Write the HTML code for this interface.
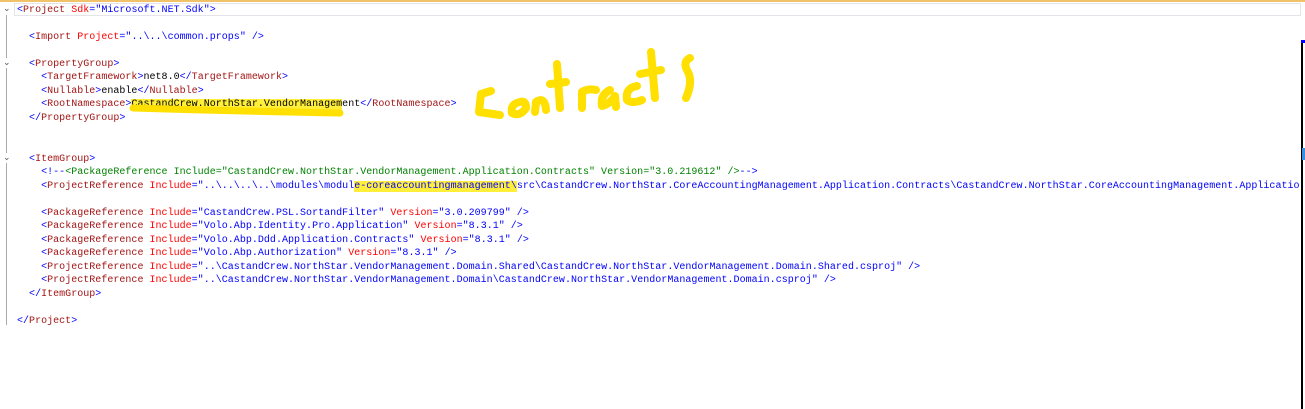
<!DOCTYPE html>
<html><head><style>
body{margin:0;width:1305px;height:409px;background:#fff;position:relative;overflow:hidden;font-family:"Liberation Mono",monospace;font-size:10px}
.l{position:absolute;left:17px;white-space:pre;line-height:13px;height:13px;letter-spacing:0.02px}
.b{color:#0000ff}.t{color:#a31515}.a{color:#ff0000}.k{color:#000}.c{color:#008000}
.hl{background:#ffef3a}
.g{position:absolute;left:6px;width:1px;background:#aaa}
.f{position:absolute;left:3px;font-size:9px;color:#555;font-family:"DejaVu Sans",sans-serif}
</style></head><body>
<div style="position:absolute;left:0;top:0;width:1305px;height:2px;background:#f0c36a"></div>
<div style="position:absolute;left:14px;top:3px;width:1285px;height:11px;border:1px solid #e4e4ea"></div>
<div style="position:absolute;left:1301px;top:40px;width:2px;height:369px;background:#000"></div>
<div style="position:absolute;left:1301px;top:40px;width:4px;height:3px;background:#00f"></div>
<div style="position:absolute;left:1302px;top:148px;width:3px;height:12px;background:#3a8ee0"></div>
<div class="g" style="top:15px;height:310px"></div>
<div class="f" style="top:4px">⌄</div>
<div class="f" style="top:58px;background:#fff">⌄</div>
<div class="f" style="top:153px;background:#fff">⌄</div>
<div class="l" style="top:4px"><span class="b">&lt;</span><span class="t">Project</span> <span class="a">Sdk</span><span class="b">="Microsoft.NET.Sdk"&gt;</span></div>
<div class="l" style="top:31px">  <span class="b">&lt;</span><span class="t">Import</span> <span class="a">Project</span><span class="b">="..\..\common.props" /&gt;</span></div>
<div class="l" style="top:58px">  <span class="b">&lt;</span><span class="t">PropertyGroup</span><span class="b">&gt;</span></div>
<div class="l" style="top:71px">    <span class="b">&lt;</span><span class="t">TargetFramework</span><span class="b">&gt;</span>net8.0<span class="b">&lt;/</span><span class="t">TargetFramework</span><span class="b">&gt;</span></div>
<div class="l" style="top:85px">    <span class="b">&lt;</span><span class="t">Nullable</span><span class="b">&gt;</span>enable<span class="b">&lt;/</span><span class="t">Nullable</span><span class="b">&gt;</span></div>
<div class="l" style="top:98px">    <span class="b">&lt;</span><span class="t">RootNamespace</span><span class="b">&gt;</span><span class="hl">CastandCrew.NorthStar.VendorManagem</span>ent<span class="b">&lt;/</span><span class="t">RootNamespace</span><span class="b">&gt;</span></div>
<div class="l" style="top:112px">  <span class="b">&lt;/</span><span class="t">PropertyGroup</span><span class="b">&gt;</span></div>
<div class="l" style="top:153px">  <span class="b">&lt;</span><span class="t">ItemGroup</span><span class="b">&gt;</span></div>
<div class="l" style="top:166px">    <span class="b">&lt;!--</span><span class="c">&lt;PackageReference Include="CastandCrew.NorthStar.VendorManagement.Application.Contracts" Version="3.0.219612" /&gt;</span><span class="b">--&gt;</span></div>
<div class="l" style="top:180px">    <span class="b">&lt;</span><span class="t">ProjectReference</span> <span class="a">Include</span><span class="b">="..\..\..\..\modules\modul<span class="hl">e-coreaccountingmanagement\</span>src\CastandCrew.NorthStar.CoreAccountingManagement.Application.Contracts\CastandCrew.NorthStar.CoreAccountingManagement.Applicatio</span></div>
<div class="l" style="top:207px">    <span class="b">&lt;</span><span class="t">PackageReference</span> <span class="a">Include</span><span class="b">="CastandCrew.PSL.SortandFilter"</span> <span class="a">Version</span><span class="b">="3.0.209799" /&gt;</span></div>
<div class="l" style="top:220px">    <span class="b">&lt;</span><span class="t">PackageReference</span> <span class="a">Include</span><span class="b">="Volo.Abp.Identity.Pro.Application"</span> <span class="a">Version</span><span class="b">="8.3.1" /&gt;</span></div>
<div class="l" style="top:234px">    <span class="b">&lt;</span><span class="t">PackageReference</span> <span class="a">Include</span><span class="b">="Volo.Abp.Ddd.Application.Contracts"</span> <span class="a">Version</span><span class="b">="8.3.1" /&gt;</span></div>
<div class="l" style="top:247px">    <span class="b">&lt;</span><span class="t">PackageReference</span> <span class="a">Include</span><span class="b">="Volo.Abp.Authorization"</span> <span class="a">Version</span><span class="b">="8.3.1" /&gt;</span></div>
<div class="l" style="top:261px">    <span class="b">&lt;</span><span class="t">ProjectReference</span> <span class="a">Include</span><span class="b">="..\CastandCrew.NorthStar.VendorManagement.Domain.Shared\CastandCrew.NorthStar.VendorManagement.Domain.Shared.csproj" /&gt;</span></div>
<div class="l" style="top:274px">    <span class="b">&lt;</span><span class="t">ProjectReference</span> <span class="a">Include</span><span class="b">="..\CastandCrew.NorthStar.VendorManagement.Domain\CastandCrew.NorthStar.VendorManagement.Domain.csproj" /&gt;</span></div>
<div class="l" style="top:288px">  <span class="b">&lt;/</span><span class="t">ItemGroup</span><span class="b">&gt;</span></div>
<div class="l" style="top:315px"><span class="b">&lt;/</span><span class="t">Project</span><span class="b">&gt;</span></div>
<svg style="position:absolute;left:0;top:0" width="1305" height="409" fill="none" stroke="#ffe000" stroke-width="8" stroke-linecap="round" stroke-linejoin="round">
<path d="M133 108 Q230 111 340 113" stroke-width="7"/>
<path d="M491 91 L481 94 L479 112 L500 115"/>
<path d="M520 102 Q510 104 512 113 Q520 117 526 108 Q526 100 520 102"/>
<path d="M535 112 L536 102 Q545 96 546 110"/>
<path d="M557 64 L560 108 M550 84 L566 82"/>
<path d="M582 108 L582 92 Q588 88 596 90"/>
<path d="M610 90 Q600 95 602 106 Q610 104 615 96 L616 107"/>
<path d="M637 86 Q625 88 627 100 Q632 104 642 100"/>
<path d="M651 52 L655 98 M640 74 L661 70"/>
<path d="M690 58 Q682 62 688 72 Q693 82 686 98"/>
</svg>
</body></html>
